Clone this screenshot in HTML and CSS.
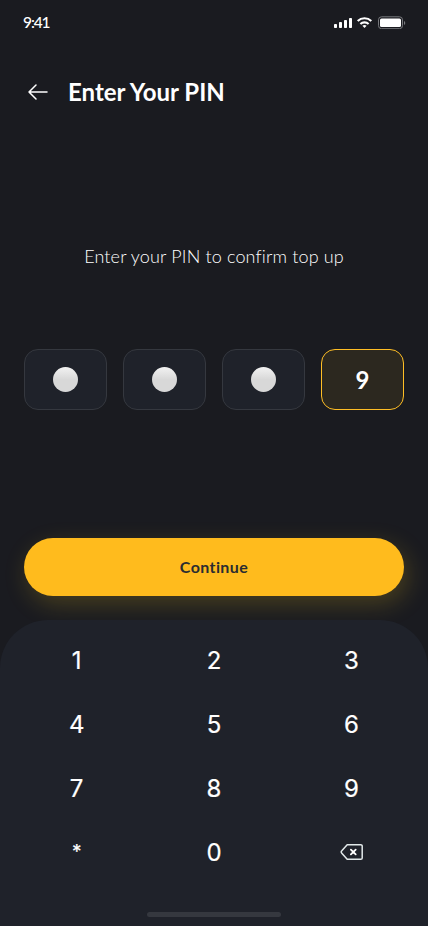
FILE: index.html
```html
<!DOCTYPE html>
<html lang="en">
<head>
<meta charset="utf-8">
<meta name="viewport" content="width=device-width, initial-scale=1">
<title>Enter Your PIN</title>
<link rel="stylesheet" href="styles.css">
</head>
<body>
<div class="screen">
  <header class="status">
    <span class="time">9:41</span>
    <svg class="status-icons" width="72" height="16" viewBox="0 0 72 16">
      <g fill="#fff">
        <rect x="0" y="11" width="3" height="4" rx="0.8"/>
        <rect x="5" y="9" width="3" height="6" rx="0.8"/>
        <rect x="10" y="7" width="3" height="8" rx="0.8"/>
        <rect x="15" y="5" width="3" height="10" rx="0.8"/>
        <rect x="46" y="5.5" width="21" height="8.5" rx="1.5"/>
      </g>
      <g fill="none" stroke="#fff" stroke-width="2.1">
        <path d="M23.7 8.1a9.7 9.7 0 0 1 13.6 0"/>
        <path d="M26.4 11a5.9 5.9 0 0 1 8.2 0"/>
      </g>
      <path d="M28.4 12.7a3.5 3.5 0 0 1 4.2 0L30.5 15z" fill="#fff"/>
      <rect x="44.5" y="3.8" width="24" height="11.9" rx="3" fill="none" stroke="#77787c"/>
      <path d="M70 8v4a2.2 2.2 0 0 0 0-4z" fill="#77787c"/>
    </svg>
  </header>
  <div class="title-bar">
    <svg class="back" width="20" height="16" viewBox="0 0 20 16" fill="none" stroke="#fff" stroke-width="1.5" stroke-linecap="round" stroke-linejoin="round">
      <path d="M19 8H1M8 1L1 8l7 7"/>
    </svg>
    <h1 class="title">Enter Your PIN</h1>
  </div>
  <p class="hint">Enter your PIN to confirm top up</p>
  <div class="pin">
    <div class="cell"><span class="dot"></span></div>
    <div class="cell"><span class="dot"></span></div>
    <div class="cell"><span class="dot"></span></div>
    <div class="cell active"><span class="digit">9</span></div>
  </div>
  <button class="continue"><span class="continue-label">Continue</span></button>
  <section class="keypad">
    <div class="keys">
      <span class="key">1</span><span class="key">2</span><span class="key">3</span>
      <span class="key">4</span><span class="key">5</span><span class="key">6</span>
      <span class="key">7</span><span class="key">8</span><span class="key">9</span>
      <span class="key star">*</span><span class="key">0</span>
      <span class="key erase">
        <svg width="24" height="18" viewBox="0 0 24 18" fill="none" stroke-linecap="round" stroke-linejoin="round">
          <path d="M7.2 1.7H20.8a1.4 1.4 0 0 1 1.4 1.4v11.8a1.4 1.4 0 0 1-1.4 1.4H7.2L1.8 10.2a1.7 1.7 0 0 1 0-2.4z" stroke="#e2e9ea" stroke-width="1.5"/>
          <path d="M10.9 6.6l4.8 4.8M15.7 6.6l-4.8 4.8" stroke="#fff" stroke-width="1.8"/>
        </svg>
      </span>
    </div>
    <div class="home"></div>
  </section>
</div>
</body>
</html>
```

FILE: styles.css
```css
* { box-sizing: border-box; }
body { margin: 0; background: #1a1b20; }
.screen {
  width: 428px;
  height: 926px;
  display: flex;
  flex-direction: column;
  background: #1a1b20;
  color: #fff;
  font-family: Lato, "Liberation Sans", sans-serif;
  overflow: hidden;
}
.status {
  height: 44px;
  padding: 12px 22px 0 23px;
  display: flex;
  justify-content: space-between;
  align-items: flex-start;
}
.status-icons { margin-top: 1px; }
.time { font-size: 15.5px; line-height: 20px; letter-spacing: -1.1px; font-weight: 500; }
.title-bar { height: 48px; margin-top: 24px; padding-left: 28px; display: flex; align-items: center; }
.title { margin: 0 0 0 20px; font-size: 24px; line-height: 30px; font-weight: 700; letter-spacing: 0; white-space: nowrap; }
.hint { margin: 127px 0 0; height: 26px; font-size: 18px; line-height: 26px; font-weight: 300; text-align: center; letter-spacing: 0.15px; white-space: nowrap; }
.pin { margin: 80px 24px 0; display: grid; grid-template-columns: repeat(4, 1fr); gap: 16px; }
.cell {
  height: 61px;
  display: flex;
  align-items: center;
  justify-content: center;
  border: 1px solid #35383f;
  border-radius: 14px;
  background: #1f222a;
}
.active { border-color: #ffbe25; background: #2c281f; }
.dot { width: 25px; height: 25px; border-radius: 50%; background: linear-gradient(#f2f2f2 0%, #e5e5e5 25%, #d8d8d8 50%, #d8d8d8 100%); }
.digit { font-size: 24px; line-height: 30px; font-weight: 700; }
.continue {
  margin: 128px 24px 0;
  height: 58px;
  padding: 0;
  border: 0;
  border-radius: 29px;
  background: #ffbb1d;
  box-shadow: 4px 8px 24px rgba(235, 190, 29, 0.22);
  color: #2a2c31;
  font: 700 16px/22px Lato, "Liberation Sans", sans-serif;
  letter-spacing: 0.4px;
}
.keypad {
  position: relative;
  margin-top: 24px;
  height: 306px;
  padding: 9px 8px 0;
  border-radius: 48px 48px 0 0;
  background: #1f222a;
}
.keys { display: grid; grid-template-columns: repeat(3, 1fr); grid-auto-rows: 64px; }
.key { display: flex; align-items: center; justify-content: center; font: 400 24px/32px Inter, sans-serif; -webkit-text-stroke: 0.2px #fff; }
.star { font-size: 19px; padding-bottom: 3px; }
.erase { padding: 0 0 2px 2px; }
.home { width: 134px; height: 5px; margin: 27px auto 0; border-radius: 3px; background: #35383f; }
```
